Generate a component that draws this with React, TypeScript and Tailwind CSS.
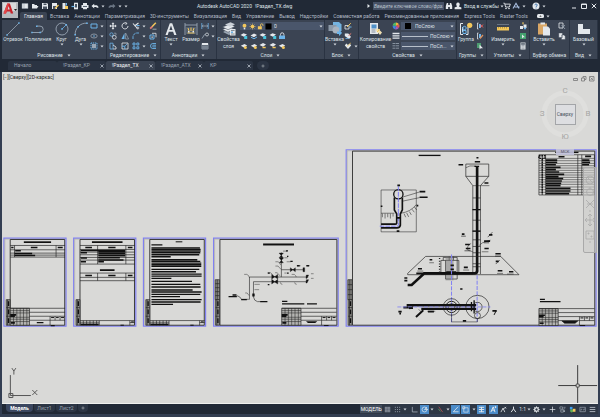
import type { ReactNode } from 'react'

const W = '#e4e8ec'
const B = '#6cb4ea'
const Y = '#f2c75c'
const G = '#9aa6b4'

/* 8x8 glyphs used by the small buttons */
const glyphs: Record<string, ReactNode> = {
  new: <path d="M1 1.5h6v5H1z M3 1.5v5" fill={W} stroke="#8a94a0" strokeWidth=".5" />,
  open: <path d="M1 6.5V2h2l1 1h2v1h1.5L6 6.5z" fill={W} />,
  save: (
    <>
      <path d="M1 1h5l1 1v5H1z" fill={W} />
      <path d="M2.5 1.5h3v1.5h-3zM2 4.5h4V7H2z" fill="#4a5462" />
    </>
  ),
  saveAs: (
    <>
      <path d="M1 1h5v6H1z" fill={W} />
      <path d="M2 4h3v3H2z" fill="#4a5462" />
      <path d="M4 6.5 7.5 3" stroke={Y} strokeWidth="1.3" />
    </>
  ),
  web: (
    <>
      <path d="M1.5 1h3v6h-3z" fill={W} />
      <path d="M4 4h3v3H4z" fill={Y} />
      <path d="M5.5 1v2.5" stroke={B} />
    </>
  ),
  mobile: (
    <>
      <path d="M3 .7h4v6.6H3z" fill={W} />
      <path d="M4 2h2v3.5H4z" fill="#44505f" />
      <path d="M.5 4.5h3" stroke={B} strokeWidth="1.2" />
    </>
  ),
  print: (
    <>
      <path d="M2 1h4v2H2zM.5 3h7v3h-7zM2 5h4v2.2H2z" fill={W} />
      <path d="M2 4.5h4" stroke="#5a6572" />
    </>
  ),
  undo: <path d="M.5 4 3.2 1.8v1.5H6l1.4 1.4v1H6L5 4.9H3.2v1.5z" fill={W} />,
  redo: <path d="M7.5 4 4.8 1.8v1.5H2L.6 4.7v1H2l1-.8h1.8v1.5z" fill="#6b7684" />,
  rect: <path d="M1 2h6v4H1z" fill="none" stroke={B} />,
  ellipse: (
    <>
      <ellipse cx="4" cy="4" rx="3.2" ry="2" fill="none" stroke={G} strokeWidth=".8" />
      <circle cx="4" cy="4" r=".8" fill={B} />
    </>
  ),
  hatch: (
    <>
      <path d="M1 1h6v6H1z" fill="none" stroke={B} strokeDasharray="1.2 .7" />
      <path d="M2 2h4v4H2z" fill={G} />
    </>
  ),
  move: <path d="M4 .3 5.4 2H4.6v1.4H6v-.8L7.7 4 6 5.4v-.8H4.6V6h.8L4 7.7 2.6 6h.8V4.6H2v.8L.3 4 2 2.6v.8h1.4V2h-.8z" fill={W} />,
  rotate: <path d="M5.5 1.3A3 3 0 1 0 7 4M4.5.4l1.4 1-1.2 1.4" fill="none" stroke={W} strokeWidth=".9" />,
  trim: (
    <>
      <path d="M1 1.5l4.5 5M6.5 1 2.5 4" stroke={W} strokeWidth="1.1" />
      <circle cx="5.8" cy="6" r="1" fill="none" stroke={W} strokeWidth=".7" />
      <path d="M4.5 3.5h3" stroke={B} />
    </>
  ),
  erase: (
    <>
      <path d="M3 4.8 6.8.8" stroke={Y} strokeWidth="1.5" />
      <path d="M1.2 6.6 3.2 4.6" stroke="#e87e75" strokeWidth="1.8" />
      <path d="M3.5 7.2h4" stroke={W} strokeWidth=".6" />
    </>
  ),
  copy: (
    <>
      <circle cx="2.5" cy="2.5" r="1.7" fill="none" stroke={B} strokeWidth=".8" />
      <circle cx="5.3" cy="5.3" r="1.9" fill="none" stroke={W} strokeWidth=".8" />
      <path d="M5 1.2h2v2" fill="none" stroke={G} strokeWidth=".7" />
    </>
  ),
  mirror: (
    <>
      <path d="M3.5 1v6h-3z" fill={B} />
      <path d="M4.6 1v6h3z" fill="none" stroke={G} strokeWidth=".7" />
    </>
  ),
  fillet: <path d="M1 7V5a4 4 0 0 1 4-4h2" fill="none" stroke={B} strokeWidth=".9" strokeDasharray="3 .6" />,
  explode: (
    <>
      <path d="M1 3h4v4H1z" fill="none" stroke={B} />
      <path d="M3 1.3h4v4" fill="none" stroke={W} strokeWidth=".8" />
      <path d="M2.5 4.5h1.3v1.2H2.5z" fill={W} />
    </>
  ),
  stretch: (
    <>
      <path d="M1 1.2h3V7H1z" fill="none" stroke={B} strokeWidth=".8" />
      <path d="M4 3l3 2v2H4" fill="none" stroke={W} strokeWidth=".8" />
    </>
  ),
  scale: (
    <>
      <path d="M1 1h6v6H1z" fill="none" stroke={W} strokeWidth=".8" />
      <path d="M1 4.2h2.8V7" fill="none" stroke={B} />
      <path d="M4 4 6 2" stroke={B} strokeWidth=".8" />
    </>
  ),
  array: <path d="M1 1h2v2H1zM4.8 1h2v2h-2zM1 4.8h2v2H1zM4.8 4.8h2v2h-2z" fill="none" stroke={B} strokeWidth=".9" />,
  offset: <path d="M7 1.5H4a2.5 2.5 0 0 0 0 5h3M7 3.2H4.3a.9.9 0 0 0 0 1.7H7" fill="none" stroke={B} strokeWidth=".9" />,
  dim: (
    <>
      <path d="M.8 1v6M7.2 1v6" stroke={B} strokeWidth=".8" />
      <path d="M1 4h6M2.3 3 1.2 4l1.1 1M5.7 3l1.1 1-1.1 1" fill="none" stroke={G} strokeWidth=".8" />
    </>
  ),
  leader: (
    <>
      <circle cx="6" cy="2.5" r="1.5" fill="none" stroke={W} strokeWidth=".7" />
      <path d="M4.6 2.6H3.5L1 6.5" fill="none" stroke={G} strokeWidth=".9" />
    </>
  ),
  table: (
    <>
      <path d="M1 1.5h6v5.5H1zM1 5h6M3 3v4M5 3v4" fill="none" stroke={G} strokeWidth=".8" />
      <path d="M1 1h6v2H1z" fill={W} />
    </>
  ),
  layA: (
    <>
      <path d="M.5 3 3.5 1.2 7 2.6 4 4.8z" fill={W} />
      <path d="M4.2 4h3v3h-3z" fill="#49c5dd" />
    </>
  ),
  layB: (
    <>
      <path d="M.5 3.5 4 1.5 7 3 4 5.2z" fill={W} />
      <path d="M1 5.2 4 6.8 7 5" fill="none" stroke={B} />
    </>
  ),
  layC: (
    <>
      <path d="M.5 3 4 1 7 2.6 4 4.8z" fill={W} />
      <path d="M3.5 5.5h3.2" stroke={Y} strokeWidth="1.5" />
    </>
  ),
  layLock: (
    <>
      <path d="M1 3.5h6V7H1z" fill={B} />
      <path d="M2.5 3.5v-1a1.7 1.7 0 0 1 3.4 0v1" fill="none" stroke={W} strokeWidth=".9" />
    </>
  ),
  layOff: (
    <>
      <path d="M.8 3.8 4.5 2 7.2 3.4 4 5.5z" fill={W} />
      <circle cx="5.4" cy="5.6" r="1.5" fill={Y} />
    </>
  ),
  blkEdit: (
    <>
      <path d="M1 3.5h4V7H1z" fill="none" stroke={W} strokeWidth=".8" />
      <path d="M3 5 6.8 1.2" stroke={Y} />
      <path d="M5.5 5h2" stroke={B} />
    </>
  ),
  blkTag: (
    <>
      <path d="M.8 1.5h3.5L7 5 5 7 .8 4z" fill={W} />
      <path d="M4.5 3.5 7.2 1.5" stroke="#e87e75" />
      <path d="M1.5 6.5h3" stroke={B} strokeWidth=".8" />
    </>
  ),
  blkHeart: (
    <>
      <path d="M4 7 .8 3.5 2.3 1.5 4 3l1.7-1.5 1.5 2z" fill={W} />
      <path d="M3.2 4.3 6.8 1" stroke={Y} strokeWidth=".8" />
    </>
  ),
  wheel: (
    <>
      <path d="M4 4V.6A3.4 3.4 0 0 1 7 2.3z" fill="#f1b33f" />
      <path d="M4 4 7 2.3A3.4 3.4 0 0 1 6.8 6z" fill="#df5755" />
      <path d="M4 4 6.8 6A3.4 3.4 0 0 1 3 7.2z" fill="#a55ac0" />
      <path d="M4 4 3 7.2A3.4 3.4 0 0 1 .7 3.5z" fill="#3f86dd" />
      <path d="M4 4 .7 3.5A3.4 3.4 0 0 1 4 .6z" fill="#52b868" />
    </>
  ),
  weight: <path d="M.5 1.5h7M.5 3.8h7M.5 6.2h7" stroke={W} strokeWidth="1.3" />,
  ltype: <path d="M.5 1.5h7M.5 3.8h7M.5 6.2h7" stroke={G} strokeWidth=".8" strokeDasharray="3 .5" />,
  grpA: (
    <>
      <path d="M1.5 1v6M1.5 1h1M1.5 7h1" stroke={W} fill="none" strokeWidth=".8" />
      <path d="M3 2h2v4H3z" fill={B} />
      <path d="M4.5 2.5 7 5.5M7 2.5 4.5 5.5" stroke="#e05a55" />
    </>
  ),
  grpB: (
    <>
      <path d="M1.5 1v6M1.5 1h1M1.5 7h1" stroke={W} fill="none" strokeWidth=".8" />
      <path d="M3 2h2v4H3z" fill={B} />
      <path d="M4 6.5 7 3" stroke="#e0905a" strokeWidth="1.2" />
    </>
  ),
  grpC: (
    <>
      <path d="M1 1h4v5H1z" fill="#4d9c70" />
      <path d="M3.5 2.5v5l1.3-1.2H7z" fill={W} />
    </>
  ),
  qsel: (
    <>
      <path d="M1 4h3v3H1zM4.5 2.5h3V6h-3z" fill={W} />
      <path d="M3 .6h2L4 3z" fill={Y} />
      <path d="M5 5.5h2v1.7H5z" fill={B} />
    </>
  ),
  selAll: (
    <>
      <path d="M1 1h6v6H1z" fill="#43a06e" />
      <path d="M3 2.5v4l1.3-1.2H6z" fill={W} />
    </>
  ),
  calc: (
    <>
      <path d="M1.5.5h5v7h-5z" fill={W} />
      <path d="M2.3 1.3h3.4v1.2H2.3zM2.4 3.5h3.2M2.4 4.9h3.2M2.4 6.3h3.2" stroke="#5a6572" strokeWidth=".5" fill="#5a6572" />
    </>
  ),
  cut: (
    <>
      <path d="M1 1h4v5H1z" fill="none" stroke={W} strokeWidth=".8" />
      <path d="M3.5 3 7 7M6.8 3 4 6.8" stroke={G} strokeWidth=".8" />
    </>
  ),
  clip: <path d="M.8 1h3.7v4.5H.8zM3.5 3H6l1.2 1.2v3.3H3.5z" fill={W} stroke="#3a4453" strokeWidth=".4" />,
  bulb: (
    <>
      <circle cx="4" cy="3" r="2.2" fill={Y} />
      <path d="M3.1 5.3h1.8v2H3.1z" fill={W} />
    </>
  ),
  sun: (
    <>
      <circle cx="4" cy="4" r="2" fill={Y} />
      <path d="M4 .5v7M.5 4h7M1.6 1.6l4.8 4.8M6.4 1.6 1.6 6.4" stroke={Y} strokeWidth=".6" />
    </>
  ),
  lock: (
    <>
      <path d="M1 3.7h4.5v3.5H1z" fill={Y} />
      <path d="M4 3.7V2.3a1.4 1.4 0 0 1 2.8 0v1" fill="none" stroke={Y} strokeWidth=".9" />
    </>
  ),
  swatch: <path d="M.5.5h7v7h-7z" fill="#000" />,
  find: <path d="M.8 7V4l1-3h1.4v2h1.6V1h1.4l1 3v3H4.8V5H3.2v2z" fill={W} />,
  user: <path d="M4 .6a1.8 1.8 0 0 1 1 3.3v.7l2.4 1v1.6H.6V5.6l2.4-1v-.7A1.8 1.8 0 0 1 4 .6z" fill={W} />,
  cart: (
    <>
      <path d="M.4 1.2h1.2l1 3.8h3.8l.9-2.9H2" fill="none" stroke={W} strokeWidth=".9" />
      <circle cx="3" cy="6.5" r=".8" fill={W} />
      <circle cx="6" cy="6.5" r=".8" fill={W} />
    </>
  ),
  app: <path d="M1 6.5 4 1.3l3 5.2M2.6 5h4.9" fill="none" stroke="#a9bfe0" strokeWidth="1.1" />,
  help: (
    <>
      <circle cx="4" cy="4" r="3.5" fill={W} />
      <path d="M2.9 3.2c0-1.6 2.3-1.5 2.3-.1 0 .9-1.1.9-1.1 1.8M4 5.6v.8" fill="none" stroke="#2d68a8" strokeWidth=".9" />
    </>
  ),
  grid: <path d="M1 1.5h6M1 3.2h6M1 4.9h6M1 6.6h6M1.5 1v6M3.2 1v6M4.9 1v6M6.6 1v6" stroke="#a6afba" strokeWidth=".6" />,
  snap: <path d="M1 1.5h6M1 4h6M1 6.5h6" stroke="#a6afba" strokeDasharray="1 1.5" />,
  ortho: <path d="M1.5 1v5.8H7.5" fill="none" stroke="#a6afba" strokeWidth=".9" />,
  polar: (
    <>
      <circle cx="4" cy="4" r="2.8" fill="none" stroke={W} strokeWidth=".8" />
      <path d="M4 4h4M4 4l2.8-2.8" stroke={W} strokeWidth=".8" />
    </>
  ),
  iso: (
    <>
      <path d="M2 .8 6.5 7" stroke="#c55757" strokeWidth=".8" />
      <path d="M1.5 3.2 4 6.2" stroke="#6aa66a" strokeWidth=".8" />
    </>
  ),
  track: <path d="M7 .8 1.5 6.6h6" fill="none" stroke={W} strokeWidth=".9" />,
  osnap: <path d="M2 2h5v5H2zM.8.8h2.4v2.4H.8z" fill="none" stroke={W} strokeWidth=".7" />,
  lwt: <path d="M1 1.5h6M1 4h6M1 6.6h6M4 1v6" stroke={W} strokeWidth="1.1" />,
  annA: <path d="M1 7 3.7 1l2 6M2.3 4.7H5M5.3 1.2h2M6.3.4v2" stroke={W} strokeWidth="1.1" fill="none" />,
  annB: <path d="M1 7 3.5 2.5 5.5 7M3.5 2.5v2M5 3 7 1M7 3 5 1" stroke={W} strokeWidth=".9" fill="none" />,
  annC: <path d="M1.3 7 4 3.3 6.7 7M4 .7v2.8" stroke={W} strokeWidth="1.1" fill="none" />,
  gear: (
    <>
      <circle cx="4" cy="4" r="2.1" fill="none" stroke={W} strokeWidth="1.5" />
      <path d="M4 .4v1.2M4 6.4v1.2M.4 4h1.2M6.4 4h1.2M1.5 1.5l.8.8M5.7 5.7l.8.8M6.5 1.5l-.8.8M2.3 5.7l-.8.8" stroke={W} strokeWidth="1" />
    </>
  ),
  plus: <path d="M4 .8v6.4M.8 4h6.4" stroke={W} strokeWidth=".8" />,
  isolate: (
    <>
      <path d="M1 1h3v2.5H1zM5 1.5h2.5M4 4l3-1M2 4.5h3V7H2z" fill="none" stroke="#a6afba" strokeWidth=".7" />
      <circle cx="6" cy="5.8" r="1" fill="#a6afba" />
    </>
  ),
  perf: (
    <>
      <path d="M1 1h3v3H1z" fill="#3f9bea" />
      <circle cx="3" cy="5.5" r="1.8" fill="#5fae57" />
      <path d="M4.4 3.2h3v3.4h-3z" fill={Y} />
    </>
  ),
  clean: <path d="M1 1.5h6.3v5H1zM2.3 5.2V3.7h1.5M6 2.8v1.6H4.6" fill="none" stroke="#a6afba" strokeWidth=".7" />,
  menu: <path d="M.8 1.6h6.4M.8 4h6.4M.8 6.4h6.4" stroke="#c9d0d8" strokeWidth=".9" />,
}

function Glyph({ name, className = 'size-2' }: { name: string; className?: string }) {
  return (
    <svg viewBox="0 0 8 8" className={`${className} shrink-0`} aria-hidden="true">
      {glyphs[name]}
    </svg>
  )
}

function Caret({ className = '' }: { className?: string }) {
  return (
    <svg viewBox="0 0 4 3" className={`h-[3px] w-1 shrink-0 ${className}`} aria-hidden="true">
      <path d="M.5.5h3L2 2.5z" fill="#d5dae0" />
    </svg>
  )
}

function Tool({ name, label, drop }: { name: string; label: string; drop?: boolean }) {
  return (
    <button type="button" aria-label={label} className="flex items-center gap-px">
      <Glyph name={name} />
      {drop && <Caret className="ml-px" />}
    </button>
  )
}

function BigTool({
  label,
  drop,
  className = '',
  children,
}: {
  label: string
  drop?: boolean
  className?: string
  children: ReactNode
}) {
  return (
    <button type="button" className={`flex shrink-0 flex-col items-center ${className}`}>
      <svg viewBox="0 0 14 14" className="size-3.5" aria-hidden="true">
        {children}
      </svg>
      <span className="text-center leading-[7px] whitespace-pre">{label}</span>
      {drop && <Caret />}
    </button>
  )
}

function ToolColumn({ tools, className = '' }: { tools: [string, string, boolean?][]; className?: string }) {
  return (
    <div className={`flex h-[27px] shrink-0 flex-col justify-start gap-[2px] ${className}`}>
      {tools.map(([name, label, drop]) => (
        <Tool key={label} name={name} label={label} drop={drop} />
      ))}
    </div>
  )
}

function Panel({ title, drop, children }: { title: string; drop?: boolean; children: ReactNode }) {
  return (
    <section className="flex min-w-0 flex-col border-r border-[#2a3342] bg-[#3b4453]">
      <div className="flex h-[31px] pt-0.5">{children}</div>
      <button type="button" className="flex h-2 items-center justify-center gap-1 whitespace-nowrap">
        {title}
        {drop && <Caret />}
      </button>
    </section>
  )
}

const menu = [
  'Вставка', 'Аннотации', 'Параметризация', '3D-инструменты', 'Визуализация', 'Вид', 'Управление', 'Вывод',
  'Надстройки', 'Совместная работа', 'Рекомендованные приложения', 'Express Tools', 'Raster Tools',
]

function TitleBar() {
  return (
    <header className="flex h-5 bg-[#212936] pl-0.5">
      <button type="button" aria-label="Меню приложения" className="mt-0.5 h-4 w-4 shrink-0 bg-[#c3c6ca]">
        <svg viewBox="0 0 16 16" className="size-4" aria-hidden="true">
          <path d="M0 0h16v16H0z" fill="#b5b9be" />
          <path d="M1 1h13v8H1z" fill="#d8dadc" />
          <path d="M1.5 11.5 5.3 1.5h2.6l3.3 10H8.7L8.2 9.4H4.8l-.8 2.1zM5.5 7.4h2.2L6.7 4z" fill="#c7232b" />
          <path d="M5.3 1.5h1.5L4 11.5H1.5z" fill="#e4474a" />
          <path d="M12 7h3l-1.5 2z" fill="#222" />
        </svg>
      </button>
      <div className="flex min-w-0 flex-1 flex-col">
        <div className="flex h-3 items-center">
          <div className="flex w-[179px] shrink-0 items-center gap-[2px] pl-[3px]">
            {[
              ['new', 'Создать'], ['open', 'Открыть'], ['save', 'Сохранить'], ['saveAs', 'Сохранить как'],
              ['web', 'Открыть из веб'], ['mobile', 'Сохранить в веб'], ['print', 'Печать'],
            ].map(([n, l]) => (
              <Tool key={n} name={n} label={l} />
            ))}
            <span className="flex gap-[3px]">
              <Tool name="undo" label="Отменить" drop />
              <Tool name="redo" label="Повторить" drop />
            </span>
            <Caret />
          </div>
          <h1 className="flex flex-1 gap-[3px] whitespace-nowrap text-[#dfe3e8]">
            <span>Autodesk AutoCAD 2020</span>
            <span>!Раздел_ТХ.dwg</span>
          </h1>
          <div className="flex shrink-0 items-center">
            <svg viewBox="0 0 3 4" className="mr-[3px] h-1 w-[3px]" aria-hidden="true">
              <path d="M.5 0v4L3 2z" fill={W} />
            </svg>
            <input
              type="text"
              aria-label="Поиск"
              placeholder="Введите ключевое слово/фразу"
              className="h-2 w-[71px] bg-[#465166] px-px text-[5px] italic outline-none placeholder:text-[#b9c1cc]"
            />
            <span className="flex items-center gap-px pl-px">
              <Tool name="find" label="Найти" />
              <Glyph name="user" />
              <button type="button" className="flex w-[37px] items-center gap-px pl-px whitespace-nowrap">
                Вход в службы
                <Caret />
              </button>
            </span>
            <span className="flex items-center gap-px pl-[3px]">
              <Tool name="cart" label="Магазин приложений" />
              <Tool name="app" label="Autodesk App" drop />
            </span>
            <span className="flex items-center pl-[6px]">
              <Tool name="help" label="Справка" drop />
            </span>
            <div className="ml-[24px] flex gap-[2px] pr-[2px]">
              {[
                ['Свернуть', 'M2 6h4'],
                ['Развернуть', 'M1.5 2h5v4.5h-5zM1.5 2.5h5'],
                ['Закрыть', 'M1.8 1.8l4.4 4.4M6.2 1.8 1.8 6.2'],
              ].map(([l, d]) => (
                <button key={l} type="button" aria-label={l}>
                  <svg viewBox="0 0 8 8" className="size-2" aria-hidden="true">
                    <path d={d} fill="none" stroke={W} />
                  </svg>
                </button>
              ))}
            </div>
          </div>
        </div>
        <nav className="flex h-2 items-center gap-[5px] whitespace-nowrap text-[#b4bcc7]">
          <button type="button" className="ml-[2px] -mr-[2px] h-2 rounded-t-xs bg-[#3b4453] px-1 leading-[8px] text-[#e6eaef]">
            Главная
          </button>
          {menu.map((m) => (
            <button key={m} type="button">{m}</button>
          ))}
          <button type="button" aria-label="Вид ленты" className="ml-1 flex items-center gap-[2px]">
            <svg viewBox="0 0 7 4" className="h-1 w-[7px]" aria-hidden="true">
              <rect width="7" height="4" rx="1.5" fill={W} />
              <path d="M2.3 2.7 3.5 1.2l1.2 1.5z" fill="#444" />
            </svg>
            <Caret />
          </button>
        </nav>
      </div>
    </header>
  )
}

function LineSelect({ label, color }: { label: string; color?: boolean }) {
  return (
    <label className="flex h-2 w-[54px] items-center bg-[#4a566b]">
      {color ? (
        <span className="ml-1 size-[6px] bg-black" />
      ) : (
        <span className="ml-px h-px w-[26px] bg-[#b8c0ca]" />
      )}
      <select
        aria-label={label}
        className={`h-2 min-w-0 flex-1 appearance-none bg-transparent text-[5px] ${color ? 'pl-1' : 'pl-0.5'}`}
      >
        <option>{label === 'Тип линий' ? 'ПоСл...' : 'ПоСлою'}</option>
      </select>
      <Caret className="mr-px" />
    </label>
  )
}

function Ribbon() {
  return (
    <div className="grid grid-cols-[105fr_54fr_56fr_108fr_34fr_98fr_30fr_43fr_40fr_28fr] border-x-2 border-b border-[#212936]">
      <Panel title="Рисование" drop>
        <BigTool label="Отрезок" className="w-[22px]">
          <path d="M1 13 13 1" stroke={G} strokeWidth=".8" />
          <path d="M.3 12.3h1.5v1.5H.3zM12.2.2h1.5v1.5h-1.5z" fill={B} />
        </BigTool>
        <BigTool label="Полилиния" className="w-[28px]">
          <path d="M1 10.5h8a3.2 3.2 0 0 0 0-6.4H6" fill="none" stroke={G} strokeWidth=".9" />
          <path d="M.2 9.8h1.5v1.5H.2zM8.4 9.8h1.5v1.5H8.4zM5 3.4h1.5v1.5H5z" fill={B} />
        </BigTool>
        <BigTool label="Круг" drop className="w-[19px]">
          <circle cx="7" cy="7" r="6" fill="none" stroke={G} strokeWidth=".9" />
          <path d="m7 7 4.2-4.2" stroke={B} strokeWidth=".8" />
          <path d="M6.2 6.2h1.6v1.6H6.2zM10.4 2h1.6v1.6h-1.6z" fill={B} />
        </BigTool>
        <BigTool label="Дуга" drop className="w-[19px]">
          <path d="M1.2 13A11 11 0 0 1 13 1.2" fill="none" stroke={G} strokeWidth=".9" />
          <path d="M.4 12h1.6v1.6H.4zM3.4 4h1.6v1.6H3.4zM12.2.4h1.6V2h-1.6z" fill={B} />
        </BigTool>
        <ToolColumn tools={[['rect', 'Прямоугольник', true], ['ellipse', 'Эллипс', true], ['hatch', 'Штриховка', true]]} />
      </Panel>
      <Panel title="Редактирование" drop>
        <ToolColumn className="ml-[2px]" tools={[['move', 'Перенести'], ['copy', 'Копировать'], ['stretch', 'Растянуть']]} />
        <ToolColumn className="ml-1" tools={[['rotate', 'Повернуть'], ['mirror', 'Зеркало'], ['scale', 'Масштаб']]} />
        <ToolColumn className="ml-[3px]" tools={[['trim', 'Обрезать', true], ['fillet', 'Сопряжение', true], ['array', 'Массив', true]]} />
        <ToolColumn className="ml-[3px]" tools={[['erase', 'Стереть'], ['explode', 'Расчленить'], ['offset', 'Подобие']]} />
      </Panel>
      <Panel title="Аннотации" drop>
        <BigTool label="Текст" drop className="w-[20px]">
          <path d="M1.5 13 5.8 1.2h2.4L12.5 13h-2.3L9.1 9.8H4.8L3.7 13zM5.4 8h3.1L7 3.4z" fill={W} />
        </BigTool>
        <BigTool label="Размер" className="w-[20px]">
          <path d="M1 1v12M13 1v12M1 3h12" stroke={G} strokeWidth=".9" />
          <path d="M2 12V5h10v7z" fill="#54606f" />
          <path d="m4 6 1 3M10 6 9 9M7 5.5V9M3.5 11h7" stroke={Y} strokeWidth="1" />
          <path d="M4 9h1.5v1.5H4zM8.5 9H10v1.5H8.5z" fill={W} />
        </BigTool>
        <ToolColumn tools={[['dim', 'Линейный', true], ['leader', 'Выноска', true], ['table', 'Таблица']]} />
      </Panel>
      <Panel title="Слои" drop>
        <BigTool label={'Свойства\nслоя'} className="w-[23px]">
          <path d="M1 10 7 13l6-3-6-3z" fill={G} />
          <path d="M.5 7.5 6 10.2l6-3-5-2.5z" fill={W} stroke="#3b4453" strokeWidth=".5" />
          <path d="M.5 5 6 7.7l7-3.2L8 2z" fill={W} stroke="#3b4453" strokeWidth=".5" />
          <path d="M3 2.5 8 4.7l5-2.5L8.5.2z" fill="#c9cfd6" />
          <path d="M8 7h5.5v6.5H8z" fill={W} />
          <path d="M9 8.5h3.6M9 12h3.6" stroke="#59646f" strokeWidth=".7" />
          <path d="M9 9.5h2v1.5H9z" fill={B} />
        </BigTool>
        <div className="flex flex-1 flex-col gap-px">
          <label className="flex h-2 items-center gap-px bg-[#4a566b] pl-px">
            <Glyph name="bulb" className="size-[7px]" />
            <Glyph name="sun" className="size-[7px]" />
            <Glyph name="lock" className="size-[7px]" />
            <Glyph name="swatch" className="size-[7px]" />
            <select aria-label="Слой" className="h-2 min-w-0 flex-1 appearance-none bg-transparent pl-px text-[5px]">
              <option>0</option>
            </select>
            <Caret className="mr-px" />
          </label>
          <div className="grid w-[48px] grid-cols-5 gap-y-[2px] pt-px">
            {['layA', 'layB', 'layA', 'layA', 'layLock', 'layOff', 'layOff', 'layC', 'layC', 'layOff'].map((n, i) => (
              <Tool key={i} name={n} label={`Слой ${i + 1}`} />
            ))}
          </div>
        </div>
      </Panel>
      <Panel title="Блок" drop>
        <BigTool label="Вставка" drop className="w-[19px]">
          <path d="M5 0h6l2.5 2.5V9H5z" fill="#74b3e0" />
          <path d="M.5 3h8v6h-8z" fill="#8c99a8" />
          <circle cx="8" cy="8" r="3.5" fill="#a9b3bf" />
          <path d="M9 9.5h2V7l3 4-3 3v-2H9z" fill={B} />
        </BigTool>
        <ToolColumn tools={[['blkEdit', 'Создать блок'], ['blkTag', 'Редактор блоков'], ['blkHeart', 'Атрибуты', true]]} />
      </Panel>
      <Panel title="Свойства" drop>
        <BigTool label={'Копирование\nсвойств'} className="w-[33px]">
          <path d="M1 1h8v11H1z" fill={W} />
          <path d="M2.5 2.5h5v4h-5z" fill="#4f91c9" />
          <path d="M2.5 8h4M2.5 10h4" stroke="#7c8794" strokeWidth=".9" />
          <path d="m6.5 8 2-2L13 10.5 11 13z" fill="#f0e0b2" />
          <path d="m8 10 3-3" stroke={Y} />
        </BigTool>
        <ToolColumn tools={[['wheel', 'Цвет'], ['weight', 'Толщина'], ['ltype', 'Линии']]} />
        <div className="ml-px flex h-[27px] flex-col justify-start gap-[2px]">
          <LineSelect label="Цвет объекта" color />
          <LineSelect label="Вес линий" />
          <LineSelect label="Тип линий" />
        </div>
      </Panel>
      <Panel title="Группы" drop>
        <BigTool label="Группа" className="w-[18px]">
          <path d="M4 1.5H1.5v11H4M9 5v7.5H7M3.5 5v5" fill="none" stroke={W} strokeWidth="1" />
          <circle cx="5.5" cy="6" r="1.7" fill="none" stroke={B} />
          <path d="M4 8.5h3v3H4z" fill="none" stroke={B} />
          <circle cx="10.7" cy="3.3" r="2.6" fill={Y} />
        </BigTool>
        <ToolColumn className="ml-px" tools={[['grpA', 'Разгруппировать'], ['grpB', 'Изменить группу'], ['grpC', 'Выбор группы']]} />
      </Panel>
      <Panel title="Утилиты" drop>
        <BigTool label="Измерить" drop className="ml-1 w-[24px]">
          <path d="M1 5h12v3.5H1z" fill={Y} />
          <path d="M2.5 5v1.5M4.5 5v1.5M6.5 5v1.5M8.5 5v1.5M10.5 5v1.5" stroke="#8a6c20" strokeWidth=".5" />
          <path d="M1 2.5h12" stroke={G} strokeWidth=".5" />
        </BigTool>
        <ToolColumn className="ml-1" tools={[['qsel', 'Быстрый выбор'], ['selAll', 'Выбрать все'], ['calc', 'Калькулятор']]} />
      </Panel>
      <Panel title="Буфер обмена">
        <BigTool label="Вставить" drop className="ml-[2px] w-[24px]">
          <path d="M1 1.5h9v11H1z" fill="#d9a766" />
          <path d="M3.5.5H8v2H3.5z" fill={W} />
          <path d="M6 4.5h5l2 2V13.5H6z" fill={W} />
        </BigTool>
        <ToolColumn className="ml-[2px]" tools={[['cut', 'Вырезать'], ['clip', 'Копировать в буфер']]} />
      </Panel>
      <Panel title="Вид" drop>
        <BigTool label="Базовый" drop className="ml-[2px] w-[23px]">
          <path d="M1 2h5v5h7v5H1z" fill={W} />
        </BigTool>
      </Panel>
    </div>
  )
}

function FileTabs() {
  const tabs = ['!Раздел_КР', '!Раздел_ТХ', '!Раздел_АТХ', 'КР']
  return (
    <nav className="flex h-[12px] items-start bg-[#212936] pt-px pl-2 whitespace-nowrap text-[#98a2af]">
      <button type="button" className="h-[9px] w-[49px] rounded-t-xs bg-[#2b3443] pl-1.5 text-left">Начало</button>
      {tabs.map((t, i) => (
        <div
          key={t}
          className={`flex h-[9px] w-[49px] items-center justify-between rounded-t-xs pr-[2px] pl-[6px] ${
            i === 1 ? 'bg-[#3b4453] text-[#eef1f4]' : 'bg-[#2b3443]'
          }`}
        >
          <button type="button">{t}</button>
          <button type="button" aria-label={`Закрыть ${t}`}>
            <svg viewBox="0 0 4 4" className="size-1" aria-hidden="true">
              <path d="m.5.5 3 3m0-3-3 3" stroke="#b7bfc9" strokeWidth=".8" />
            </svg>
          </button>
        </div>
      ))}
      <button type="button" aria-label="Новый чертеж" className="ml-1 flex h-[9px] w-3 items-center justify-center rounded-full bg-[#2b3443]">
        <Glyph name="plus" className="size-1" />
      </button>
    </nav>
  )
}

/* Horizontal strokes given as [x, y, width] */
function Bars({ rows, w = 4 }: { rows: number[][]; w?: number }) {
  return <path d={rows.map(([x, y, l]) => `M${x} ${y}h${l}`).join('')} stroke="#111" strokeWidth={w} />
}

function SideStamp({ x, y = 208 }: { x: number; y?: number }) {
  return (
    <g transform={`translate(${x} ${y})`}>
      <path d="M0 0h12v77H0zM0 24h12M0 50h12M4 0v77" fill="#8f8f8b" stroke="#222" strokeWidth="2" />
      <path d="M7 5v14M7 30v14M7 56v14" stroke="#111" strokeWidth="4" />
    </g>
  )
}

function Stamp({ x, y, w }: { x: number; y: number; w: number }) {
  return (
    <g transform={`translate(${x} ${y})`} fill="none" stroke="#222" strokeWidth="2">
      <path d="M0 0h58v51H0z" fill="#b4b4b1" />
      <path d="M10 0v51M20 0v51M30 0v51M40 0v51M50 0v51M0 7h58M0 14h58M0 27h58M0 33h58M0 40h58" strokeWidth="1.6" />
      <path d={`M0 0H${w}M58 12H${w}M58 24H${w}M58 36H${w - 45}M${w - 45} 24v27M${w - 30} 24v12M${w - 15} 24v12M${w - 45} 36H${w}`} />
      <path d="M0 20h18M0 24h14M2 44h12" stroke="#111" strokeWidth="5" />
      <path d={`M${w - 42} 28h9M${w - 27} 28h8M${w - 12} 28h9`} stroke="#111" strokeWidth="3" />
    </g>
  )
}

function SmallStamp({ x }: { x: number }) {
  return (
    <g transform={`translate(${x} 271)`} fill="none" stroke="#222" strokeWidth="2">
      <path d="M0 0h165M0 5h58M0 10h58M58 0v14M150 0v14M150 6h15M10 0v14M20 0v14M30 0v14M40 0v14M50 0v14" />
      <path d="M2 12h54" stroke="#111" strokeWidth="4" />
      <path d="M154 4h8M122 14h10" stroke="#111" strokeWidth="3" />
    </g>
  )
}

function Frame({ x, w, y = 23, h = 265 }: { x: number; w: number; y?: number; h?: number }) {
  return (
    <g fill="none">
      <path d={`M${x} ${y}h${w}v${h}h${-w}z`} stroke="#8080f2" strokeWidth="3.6" />
      <path d={`M${x + 3} ${y + h - 3}V${y + 3}h${w - 6}`} stroke="#a6a691" strokeWidth="1.5" />
      <path d={`M${x + 19} ${y + 4}h${w - 23}v${h - 7}h${23 - w}z`} stroke="#333" strokeWidth="2.8" />
    </g>
  )
}

const noteRows = [
  [453, 43, 33], [453, 52, 146], [453, 57, 148], [453, 62, 148], [453, 67, 147], [453, 73, 144], [453, 79, 58],
  [453, 88, 138], [453, 93, 147], [453, 98, 150], [453, 103, 150], [453, 108, 150], [453, 117, 144], [453, 124, 134],
  [453, 131, 151], [453, 137, 151], [453, 144, 60], [453, 153, 122], [453, 162, 147], [453, 170, 148], [453, 179, 124],
  [453, 185, 151], [453, 192, 147], [453, 199, 86], [453, 208, 151], [453, 215, 148], [453, 222, 65],
]

function SpecSheets() {
  return (
    <g transform="translate(0 230) scale(.3333)">
      <Frame x={9} w={187} />
      <SideStamp x={16} />
      <Bars rows={[[69, 35, 82]]} w={5} />
      <path d="M28 45h165M28 58h165M28 68h165M28 74h165M28 80h165M41 45v35M166 45v35" fill="none" stroke="#222" strokeWidth="2" />
      <Bars rows={[[90, 51, 20], [171, 51, 15], [31, 51, 7], [43, 61, 17], [41, 69, 53], [41, 75, 62]]} w={4.5} />
      <Stamp x={28} y={234} w={165} />
      <Bars rows={[[108, 277, 20], [150, 286, 12]]} />

      <Frame x={219} w={187} />
      <SideStamp x={226} />
      <Bars rows={[[274, 35, 92], [298, 119, 44]]} w={5} />
      <path
        d="M238 45h165M238 57h165M238 65h165M238 73h165M238 81h165M238 89h165M238 101h165M291 45v56M376 45v56M238 128h165M238 141h165M238 151h165M291 128v23M376 128v23"
        fill="none"
        stroke="#222"
        strokeWidth="2"
      />
      <Bars
        w={4.5}
        rows={[
          [254, 51, 20], [323, 51, 22], [382, 51, 14], [240, 60, 134], [240, 67, 19], [293, 65, 81], [293, 70, 81],
          [293, 76, 81], [240, 83, 19], [293, 82, 65], [293, 89, 76], [240, 94, 16], [293, 94, 17], [254, 135, 20],
          [323, 135, 22], [382, 135, 14],
        ]}
      />
      <SmallStamp x={238} />

      <Frame x={429} w={187} />
      <SideStamp x={436} />
      <Bars rows={[[526, 34, 20]]} w={3} />
      <Bars rows={noteRows} w={4} />
      <SmallStamp x={448} />
    </g>
  )
}

function SchemeSheet() {
  return (
    <g transform="translate(205 230) scale(.3333)">
      <Frame x={25} w={375} />
      <g fill="#888884" stroke="#222" strokeWidth="2">
        <path d="M30 148h13v60H30zM30 160h13M30 172h13M30 184h13M30 196h13M36 148v60" />
      </g>
      <SideStamp x={31} />
      <Bars rows={[[174, 42, 93]]} w={6} />
      <g fill="none" stroke="#333" strokeWidth="2">
        <path d="M133 208v-68h177M145 200v-46h162M229 140V66M229 118h69M145 200q2 12 12 14h8M95 196q10 2 14 11h22" />
        <path d="M117 132h8q6 2 8 10M188 127h8q5 2 8 10M210 127h6l10 10M211 94h8q6 3 8 10M211 107h8l9 10M234 62h12M238 82h10M245 94h12M245 128h-7M260 132h8q4 3 6 8M275 106h12M307 106h8M318 130h8M318 144h8M148 162h16M148 178h14M120 188h6l6 8M215 158l-8-3M232 162q-6 0-6-6M275 162q-6 0-6-6" strokeWidth="1.5" />
      </g>
      <path d="M200 132v14l18-14v14zM200 147v14l18-14v14zM256 112v12l15-12v12zM222 68h13l-13 14h13zM223 83h12l-12 14h12zM294 112h5v12h-5zM304 134h7l-5 10h-3zM304 148h7l-5 10h-3zM142 190h6v8h-6z" fill="#111" stroke="#111" />
      <Bars
        rows={[[70, 199, 25], [82, 194, 12], [108, 208, 17], [165, 214, 22], [243, 61, 6], [246, 78, 4], [256, 93, 7], [276, 106, 8], [304, 106, 8], [188, 128, 6], [188, 163, 5], [246, 128, 5]]}
        w={4}
      />
      <Bars rows={[[231, 213, 16], [231, 221, 67], [306, 221, 30]]} w={4} />
      <Stamp x={230} y={234} w={165} />
      <path d="M303 273h34l-6 5h-22z" fill="#111" />
      <Bars rows={[[357, 286, 14]]} w={3} />
    </g>
  )
}

function Tank() {
  return (
    <g transform="translate(345 145) scale(.3333)" fill="none" stroke="#222" strokeWidth="2">
      <Frame x={4} w={752} y={12} h={531} />
      <g fill="#888884">
        <path d="M9 403h13v60H9zM9 418h13M9 433h13M9 448h13M15 403v60" />
      </g>
      <SideStamp x={10} y={463} />
      <Bars rows={[[222, 29, 66]]} w={4} />

      {/* well head detail */}
      <path d="M109 133h106v126H109zM109 203h40M168 203q30-4 47-26M175 154l50-15M172 167l53-11" strokeWidth="1.6" />
      <path d="M113 204v11M121 204v15M129 204v11M137 204v15M145 204v9M178 204l5 11M186 202l6 12M194 198l6 10M202 191l7 9M209 184l7 9" strokeWidth="1.6" />
      <circle cx="161" cy="146" r="14" stroke="#111" strokeWidth="4" />
      <path d="M149 156v37l7 12v28q-1 3-5 3h-42M173 156v37l-6 12v34q-2 8-10 8h-48" stroke="#111" strokeWidth="5" />
      <path d="M161 122v75M161 197v42q-1 3-4 3h-52" stroke="#7f7ff5" strokeWidth="3" strokeDasharray="14 3" />
      <Bars rows={[[158, 119, 8], [225, 138, 17], [225, 155, 24], [108, 182, 5], [216, 180, 5], [157, 217, 9], [156, 257, 8]]} w={5} />

      {/* tower */}
      <path d="M364 55h69v37l-25 28v266M364 55v37l21 28v266M364 92h69M385 157h23M385 192h23M385 224h23M385 257h23M385 283h23M385 303h23M385 322h23M385 355h23M385 364h23" />
      <path d="M364 66q10-8 30-5M385 120h50M412 319h20M385 319l-15-5q-4-14 10-20M404 300l10-8 24-8" strokeWidth="1.6" />
      <path d="M398 62v316" stroke="#111" strokeWidth="8" />
      <path d="M384 192h24M384 257h24M390 62h14" stroke="#111" strokeWidth="4" />
      <Bars rows={[[342, 57, 14], [391, 48, 16], [396, 36, 6], [420, 112, 12], [352, 266, 8], [362, 297, 14], [364, 309, 14], [419, 287, 18], [420, 309, 13], [434, 268, 10], [453, 325, 16], [454, 348, 9]]} w={5} />
      <path d="M350 272h14M360 316h18M418 292h16M430 275l14-15M452 332h18M454 356l12-12" />

      {/* ground section */}
      <path d="M189 388v-4l54-51h226l55 55H189M289 345h54v41h-54zM303 345v56M338 345v56M296 345v-9h42v9M303 401h35M314 333v12M327 333v12" />
      <path d="M303 333h24v72h-24z" fill="#77777780" stroke="none" />
      <path d="M189 419h12l38-35h151q8 0 8-8" stroke="#111" strokeWidth="8" />
      <path d="M215 384h170M305 380h30" stroke="#111" strokeWidth="5" />
      <path d="M321 327v204M398 390v140" stroke="#7f7ff5" strokeWidth="3" strokeDasharray="12 4" />
      <Bars rows={[[179, 398, 9], [179, 406, 9], [220, 370, 12], [255, 343, 8], [318, 360, 10], [318, 372, 10], [358, 366, 12], [460, 376, 14], [494, 379, 13]]} w={5} />
      <path d="M218 377h18M254 352h14M356 374h18M458 384h18M488 386h20" strokeWidth="1.6" />
      <path d="M285 338v44" strokeDasharray="3 5" strokeWidth="4" />

      {/* plan */}
      <circle cx="321" cy="485" r="25" />
      <circle cx="321" cy="485" r="17" strokeWidth="3" />
      <circle cx="321" cy="485" r="10" />
      <circle cx="399" cy="485" r="35" />
      <circle cx="399" cy="485" r="14" />
      <circle cx="399" cy="511" r="9" />
      <path d="M186 480h209M230 491h165" stroke="#111" strokeWidth="7" />
      <path d="M214 515l22-20M176 487h28" stroke="#111" strokeWidth="6" />
      <path d="M158 485h280" stroke="#7f7ff5" strokeWidth="2.4" strokeDasharray="12 4" />
      <path d="M389 465v40M381 470v28" stroke="#111" strokeWidth="4" />
      <path d="M321 505v25h78v-10M196 492l10-10M248 498h24M222 492l8 8" strokeWidth="1.6" />
      <Bars rows={[[347, 431, 7], [355, 527, 10], [161, 499, 10], [164, 505, 5], [193, 489, 12], [250, 499, 18], [444, 497, 13]]} w={5} />
      <path d="M455 497l-6 12" stroke="#111" strokeWidth="3" />

      {/* equipment list */}
      <g transform="translate(375 0)">
        <path d="M209 27h167v121H209zM229 27v121M326 27v121M338 27v121M219 27v121" />
        <path
          d="M209 38h167M209 45h167M209 53h167M209 60h167M209 67h167M209 74h167M209 81h167M209 88h167M209 95h167M209 102h167M209 109h167M209 116h167M209 124h167M209 132h167M209 140h167"
          strokeWidth="1.6"
        />
        <path d="M209 30h18v8h-18zM219 40v106" stroke="#111" strokeWidth="4" strokeDasharray="5 2.5" />
        <Bars
          w={5}
          rows={[
            [268, 33, 18], [348, 32, 18], [230, 43, 34], [230, 50, 34], [230, 57, 30], [230, 65, 44], [230, 72, 30],
            [230, 79, 40], [230, 86, 55], [230, 93, 38], [230, 99, 52], [230, 106, 48], [230, 113, 46], [230, 120, 44],
            [230, 128, 74], [230, 136, 74], [230, 144, 70], [339, 43, 22], [339, 50, 24], [339, 57, 21],
          ]}
        />
        <Bars rows={[[258, 20, 70]]} w={4} />
        <Bars rows={[[212, 462, 15], [212, 469, 62]]} w={4} />
        <Stamp x={209} y={490} w={167} />
        <path d="M278 527h48l-8 7h-32z" fill="#111" />
        <Bars rows={[[332, 541, 16]]} w={3} />
      </g>
    </g>
  )
}

function ViewCube() {
  const face = 'relative flex items-center justify-center text-[8px] leading-[8px] text-[#a6a6a4]'
  return (
    <div className="absolute top-[13px] right-[4px] grid size-[58px] grid-cols-[12px_1fr_12px] grid-rows-[12px_1fr_12px]">
      <svg viewBox="0 0 58 58" className="absolute inset-0 size-full" aria-hidden="true">
        <circle cx="29" cy="29" r="21" fill="none" stroke="#dfdfdd" strokeWidth="5" />
      </svg>
      <button type="button" className={`${face} col-start-2`}>С</button>
      <button type="button" className={`${face} col-start-1 row-start-2`}>З</button>
      <button
        type="button"
        className="relative col-start-2 row-start-2 m-auto size-[21px] border border-[#a3a5a8] bg-[#dddee1] text-[5px] text-[#4c535d]"
      >
        Сверху
      </button>
      <button type="button" className={`${face} col-start-3 row-start-2`}>В</button>
      <button type="button" className={`${face} col-start-2 row-start-3`}>Ю</button>
    </div>
  )
}

function Canvas() {
  return (
    <main className="relative flex-1 overflow-hidden bg-[#d9d9d7]">
      <svg viewBox="2 71 596 332" preserveAspectRatio="xMidYMid meet" className="absolute inset-0 size-full" role="img" aria-label="Чертеж">
        <SpecSheets />
        <SchemeSheet />
        <Tank />
        <g fill="none" stroke="#3d3d3d" strokeWidth="1">
          <path d="M9.5 375v20.5H30M8 393.5h4v4H8z" stroke="#555" />
          <path d="M11 368l2 3 2-3M13 371v3.5M31.5 390l5 5M36.5 390l-5 5" strokeWidth=".8" />
          <path d="M578.5 365v38M559 385.5h39" />
          <path d="M577 384h3v3h-3z" fill="#d9d9d7" strokeWidth=".8" />
        </g>
      </svg>
      <p className="absolute top-[2px] left-[1px] text-[5px] text-[#222]">[−][Сверху][2D-каркас]</p>
      <div className="absolute top-[3px] right-[3px] flex gap-px">
        {[
          ['Свернуть окно', 'M1.5 3.5h4v2h-4z'],
          ['Восстановить окно', 'M1.5 3h3v3h-3zM3 3V1.5h3v3H4.5'],
          ['Закрыть окно', 'M1.5 1.5h4.5V6H1.5zM2.5 2.5 5 5M5 2.5 2.5 5'],
        ].map(([l, d]) => (
          <button key={l} type="button" aria-label={l}>
            <svg viewBox="0 0 7 7" className="size-[7px]" aria-hidden="true">
              <path d={d} fill="none" stroke="#777" strokeWidth=".8" />
            </svg>
          </button>
        ))}
      </div>
      <ViewCube />
      <button type="button" className="absolute top-[77px] right-[24px] h-[6px] w-[18px] bg-[#c3c3dc]/90 text-center text-[4px] leading-[6px] text-[#55555f]">
        МСК
      </button>
      <div className="absolute top-[95px] right-[1px] flex h-[86px] w-[14px] flex-col items-center rounded-l-xs border border-[#a9a9a9] bg-[#cdcdcb]/60 py-[6px]">
        <svg viewBox="0 0 12 70" className="h-[70px] w-3" fill="none" stroke="#aaaaaa" strokeWidth=".8" role="img" aria-label="Панель навигации">
          <circle cx="6" cy="6" r="4" />
          <path d="M3 3l6 6M6 13v1" />
          <circle cx="6" cy="18" r="3.5" />
          <path d="M2 26l8 8M10 26l-8 8M3 30h6M5 37h2M6 40v12M1.5 46h9M4 42l2-2 2 2M4 50l2 2 2-2M3 44l-2 2 2 2M9 44l2 2-2 2M2 57h8v8H2zM4 59h1v1H4zM7 62h1v1H7zM5 68h2" />
        </svg>
      </div>
    </main>
  )
}

function StatusTool({ name, label, on }: { name: string; label: string; on?: boolean }) {
  return (
    <button type="button" aria-label={label} aria-pressed={!!on} className={`flex size-[9px] items-center justify-center ${on ? 'bg-[#4a8bc9]' : ''}`}>
      <Glyph name={name} className="size-[7px]" />
    </button>
  )
}

function StatusBar() {
  return (
    <footer className="flex h-[11px] items-start justify-between border-t border-[#f0f0ee] bg-[#212936] pl-1 whitespace-nowrap">
      <nav className="flex items-center text-[#9aa4b1]">
        <button type="button" className="h-2 w-[27px] rounded-b-sm bg-[#3b4760] leading-[7px] font-bold text-white">Модель</button>
        <button type="button" className="ml-px h-2 w-[21px] rounded-b-sm bg-[#2d3645] leading-[7px]">Лист1</button>
        <button type="button" className="ml-px h-2 w-[21px] rounded-b-sm bg-[#2d3645] leading-[7px]">Лист2</button>
        <button type="button" aria-label="Новый лист" className="ml-px flex h-2 w-[10px] items-center justify-center rounded-b-sm bg-[#2d3645]">
          <Glyph name="plus" className="size-1" />
        </button>
      </nav>
      <div className="flex h-[10px] items-center gap-px bg-[#2e3745] pr-px">
        <button type="button" className="h-2 w-[22px] bg-[#414c5c] leading-[8px] text-white">МОДЕЛЬ</button>
        <StatusTool name="grid" label="Сетка" />
        <StatusTool name="snap" label="Привязка" />
        <Caret className="mr-[2px]" />
        <StatusTool name="ortho" label="Орто" />
        <StatusTool name="polar" label="Полярное отслеживание" on />
        <Caret className="mr-px" />
        <StatusTool name="iso" label="Изометрия" />
        <Caret />
        <StatusTool name="track" label="Объектное отслеживание" on />
        <StatusTool name="osnap" label="Объектная привязка" on />
        <Caret className="ml-px" />
        <StatusTool name="lwt" label="Вес линий" on />
        <span className="w-px" />
        <StatusTool name="annA" label="Видимость аннотаций" on />
        <StatusTool name="annB" label="Автомасштаб" />
        <StatusTool name="annC" label="Масштаб аннотаций" />
        <button type="button" className="flex items-center gap-px text-[#dfe3e8]">
          1:1
          <Caret />
        </button>
        <StatusTool name="gear" label="Рабочее пространство" />
        <Caret className="mr-px" />
        <StatusTool name="plus" label="Монитор аннотаций" />
        <StatusTool name="isolate" label="Изолировать" />
        <StatusTool name="perf" label="Графика" />
        <StatusTool name="clean" label="Очистить экран" />
        <StatusTool name="menu" label="Адаптация" />
      </div>
    </footer>
  )
}

export default function App() {
  return (
    <div className="flex min-h-screen flex-col bg-[#212936] font-[Roboto,'Noto_Sans',sans-serif] text-[5px] leading-[7px] text-[#dde2e8]">
      <TitleBar />
      <Ribbon />
      <FileTabs />
      <div className="flex flex-1 flex-col border-x-2 border-b-[3px] border-[#333e52]">
        <Canvas />
        <StatusBar />
      </div>
    </div>
  )
}
